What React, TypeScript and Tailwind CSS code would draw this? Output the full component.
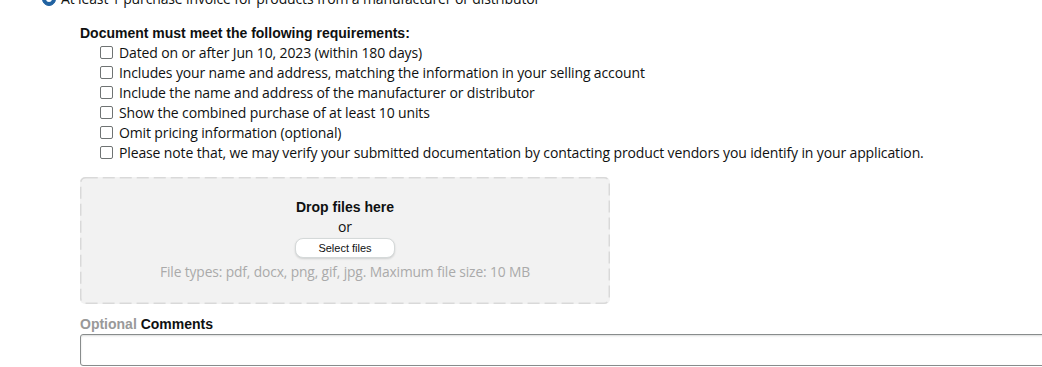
import React from 'react';

const requirements = [
    'Dated on or after Jun 10, 2023 (within 180 days)',
    'Includes your name and address, matching the information in your selling account',
    'Include the name and address of the manufacturer or distributor',
    'Show the combined purchase of at least 10 units',
    'Omit pricing information (optional)',
    'Please note that, we may verify your submitted documentation by contacting product vendors you identify in your application.',
];

const DropZone: React.FC = () => (
    <div className="relative mt-[15px] w-[530px] h-[127px] rounded-[5px] bg-[#f2f2f2] flex flex-col items-center pt-[20px]">
        {/* dashed outline */}
        <svg className="absolute inset-0 pointer-events-none" width="530" height="127">
            <rect
                x="0.75"
                y="0.75"
                width="528.5"
                height="125.5"
                rx="5"
                fill="none"
                stroke="#d9d9d9"
                strokeWidth="1.5"
                strokeDasharray="12 5"
            />
        </svg>
        <span className="font-['Liberation_Sans',sans-serif] tracking-normal text-[14px] leading-5 font-bold text-[#0f1111]">
            Drop files here
        </span>
        <span className="text-[14px] leading-5 text-[#0f1111]">or</span>
        <button
            type="button"
            className="mt-px w-[100px] h-[20px] rounded-[8px] bg-white border border-[#d5d9d9] shadow-[0_1px_2px_rgba(15,17,17,0.15)] font-['Liberation_Sans',sans-serif] tracking-normal text-[11px] text-[#0f1111] leading-none"
        >
            Select files
        </button>
        <span className="mt-[4px] text-[13.8px] leading-5 text-[#aaaaaa]">
            File types: pdf, docx, png, gif, jpg. Maximum file size: 10 MB
        </span>
    </div>
);

export default function App() {
    return (
        <div className="relative h-[367px] w-[1042px] overflow-hidden bg-white font-['Open_Sans',sans-serif] tracking-[-0.13px] text-[#0f1111]">
            <div className="-mt-[11px] flex items-center h-[20px] pl-[42px] gap-[5px]">
                <span className="flex items-center justify-center w-[14px] h-[14px] rounded-full bg-[#2162a1] border border-[#2162a1]">
                    <span className="w-[6px] h-[6px] rounded-full bg-white" />
                </span>
                <span className="text-[14px] leading-5">
                    At least 1 purchase invoice for products from a manufacturer or distributor
                </span>
            </div>

            <div className="pl-[80px] pt-[15px]">
                <h3 className="font-['Liberation_Sans',sans-serif] tracking-normal text-[14px] leading-[18px] font-bold">
                    Document must meet the following requirements:
                </h3>
                <ul className="pl-[20px]">
                    {requirements.map((item) => (
                        <li key={item} className="flex items-center h-5 gap-[6px] text-[14px]">
                            <span className="w-[13px] h-[13px] rounded-[2px] border border-[#6f7373] bg-white shrink-0" />
                            <span>{item}</span>
                        </li>
                    ))}
                </ul>

                <DropZone />

                <div className="mt-[10px] font-['Liberation_Sans',sans-serif] tracking-normal text-[14px] leading-5 font-bold">
                    <span className="text-[#999999]">Optional</span> Comments
                </div>
                <input
                    type="text"
                    className="w-[990px] h-[32px] rounded-[3px] border border-[#888c8c] shadow-[inset_0_1px_2px_rgba(15,17,17,0.15)] outline-none"
                />
            </div>
        </div>
    );
}
